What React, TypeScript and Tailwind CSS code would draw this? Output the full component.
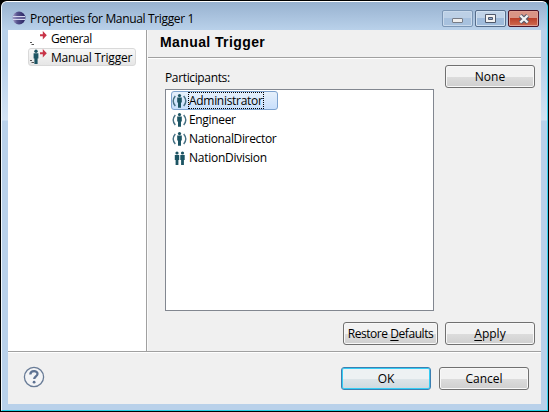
import type { ReactNode } from "react";

function PersonIcon({ group = false }: { group?: boolean }) {
  return (
    <svg width="16" height="16" viewBox="0 0 16 16" className="shrink-0" fill="#1c5463">
      {group ? (
        <>
          <circle cx="5" cy="3" r="1.6" />
          <path d="M2.800 5h4.400v5h-.8v5H3.600v-5h-.8z" />
          <circle cx="10.500" cy="3" r="1.6" />
          <path d="M8.300 5h4.400v5h-.8v5H9.100v-5h-.8z" />
        </>
      ) : (
        <>
          <circle cx="7.500" cy="2.600" r="1.600" />
          <path d="M5.200 4.500h4.600v5H9v5.200H6V9.500h-.8z" />
          <path d="M3.300 3Q-.9 8 3.300 13M11.700 3q4.200 5 0 10" fill="none" stroke="#456f82" strokeWidth="1.4" />
        </>
      )}
    </svg>
  );
}

function TriggerIcon({ person = false }: { person?: boolean }) {
  return (
    <svg width="18" height="16" viewBox="0 0 18 16" className="shrink-0">
      <path d="M0 11.500h2M1.500 13.500h2.500" stroke="#555" strokeWidth="1" />
      {person && (
        <g fill="#1c5463">
          <circle cx="6" cy="2.300" r="1.700" />
          <path d="M3.600 4.200h4.800v5.300h-.8V15H4.400V9.500h-.8z" />
        </g>
      )}
      <path d="M10 3.200h2.800V0L16.800 4.200l-4 4.200V5.300H10z" fill="#c83448" />
    </svg>
  );
}

function Button({ className, primary = false, children }: { className: string; primary?: boolean; children: ReactNode }) {
  return (
    <button
      className={`flex h-[23px] items-center justify-center rounded-[3px] border whitespace-nowrap ${
        primary
          ? "border-[#3c7fb1] bg-linear-to-b from-[#edf1f3] from-50% via-[#dde5e9] via-50% to-[#ced9df] shadow-[inset_0_0_0_1px_#35cdf5]"
          : "border-[#707070] bg-linear-to-b from-[#f2f2f2] from-50% via-[#dddddd] via-50% to-[#cfcfcf] shadow-[inset_0_0_0_1px_#f8f8f8]"
      } ${className}`}
    >
      {children}
    </button>
  );
}

const participants = [
  { name: "Engineer", group: false, tracking: "tracking-[-0.33px]" },
  { name: "NationalDirector", group: false, tracking: "tracking-[-0.34px]" },
  { name: "NationDivision", group: true, tracking: "tracking-[-0.27px]" },
];

export default function App() {
  return (
    <div className="h-[412px] w-[549px] overflow-hidden bg-black p-px font-['Open_Sans','Noto_Sans',sans-serif] text-[12px] leading-4 text-black">
      <div className="flex h-[410px] w-[547px] flex-col rounded-t-[6px] border border-t-white border-r-[#38d2ee] border-b-[#22cfe5] border-l-[#f2f8fc] bg-[#b9d1ea] bg-linear-to-b from-[#b9d1ea] from-[60px] via-[#d3e3f4] via-[118px] to-[#b9d1ea] to-[119px] px-[6px] pb-[6px]">
        <header className="-mx-[6px] flex h-7 shrink-0 items-center rounded-t-[5px] bg-linear-to-b from-[#98b2d0] to-[#b9d1ea] pr-[8px] pl-[10px]">
          <svg width="14" height="14" viewBox="0 0 14 14" className="mt-[4px]">
            <defs>
              <linearGradient id="orb" x2="1">
                <stop stopColor="#aaa3cc" />
                <stop offset=".35" stopColor="#57548f" />
                <stop offset="1" stopColor="#272160" />
              </linearGradient>
            </defs>
            <circle cx="7" cy="7" r="6.400" fill="url(#orb)" />
            <path d="M1 5.500h12M1 8.500h12" stroke="#d5d6ee" strokeWidth="1.100" />
            <path d="M.7 7h12.600" stroke="#8d8abb" strokeWidth="1" />
          </svg>
          <h1 className="mt-[6px] ml-[4px] flex-1 tracking-[-0.34px] whitespace-nowrap">Properties for Manual Trigger 1</h1>
          <div className="mt-[5px] flex gap-[2px]">
            <div className="flex h-[17px] w-[31px] items-center justify-center rounded-[2px] border border-[#7b96b5] bg-linear-to-b from-[#bcd0e6] from-50% to-[#a7c1de] to-50% shadow-[inset_0_0_0_1px_#c9daec]">
              <div className="mt-1 h-[5px] w-[11px] rounded-[1px] border border-[#777c86] bg-[#eeeeee]" />
            </div>
            <div className="flex h-[17px] w-[31px] items-center justify-center rounded-[2px] border border-[#566d8b] bg-linear-to-b from-[#c0d3e8] from-50% to-[#9fbbdb] to-50% shadow-[inset_0_0_0_1px_#d2e1f1]">
              <svg width="11" height="9" viewBox="0 0 11 9">
                <path d="M.5.5h10v8H.5z" fill="#f2f2f2" stroke="#4f596c" />
                <path d="M3.500 3.500h4v2h-4z" fill="#8faad0" stroke="#4f596c" />
              </svg>
            </div>
            <div className="flex h-[17px] w-[31px] items-center justify-center rounded-[2px] border border-[#4c1529] bg-linear-to-b from-[#d99486] from-45% via-[#b83b27] via-45% to-[#cf6b50] shadow-[inset_0_0_0_1px_#e0a093]">
              <svg width="12" height="10" viewBox="0 0 12 10">
                <path d="M2.300 1.500l7.400 7m0-7l-7.400 7" stroke="#54596b" strokeWidth="4.400" />
                <path d="M2.300 1.500l7.400 7m0-7l-7.400 7" stroke="#f4f4f4" strokeWidth="2.400" />
              </svg>
            </div>
          </div>
        </header>
        <main className="flex h-[374px] w-[533px] flex-col bg-[#f0f0f0]">
          <div className="flex h-[321px] shrink-0">
            <nav className="h-full w-[139px] shrink-0 border-r border-[#a0a0a0] bg-white pl-[20px]">
              <div className="flex h-[18px] items-center pl-[2px]">
                <TriggerIcon />
                <span className="ml-[3px] tracking-[-0.5px]">General</span>
              </div>
              <div className="flex h-[18px] w-[108px] items-center rounded-[3px] border border-[#d9d9d9] bg-linear-to-b from-[#f8f8f8] to-[#e6e6e6] pl-px">
                <TriggerIcon person />
                <span className="mt-px ml-[3px] tracking-[-0.22px] whitespace-nowrap">Manual Trigger</span>
              </div>
            </nav>
            <section className="flex flex-1 flex-col border-l border-[#fafafa]">
              <h2 className="h-[28px] border-b border-[#a0a0a0] pt-[4px] pl-[12px] font-['Liberation_Sans',Arial,sans-serif] text-[14px] font-bold tracking-[0.4px]">Manual Trigger</h2>
              <div className="flex flex-1 flex-col border-t border-white pt-[6px] pl-[17px]">
                <div className="flex gap-[11px]">
                  <div className="w-[269px]">
                    <div className="h-[24px] pt-[5px] tracking-[-0.36px]">Participants:</div>
                    <div className="h-[222px] border border-[#828790] bg-white pt-px pl-[5px]">
                      <div className="flex h-[19px] w-[107px] items-center rounded-[3px] border border-[#7da2ce] bg-linear-to-b from-[#e6f0fb] to-[#c8dffc]">
                        <PersonIcon />
                        <span className="h-[17px] w-[76px] border border-dotted border-black tracking-[-0.3px] whitespace-nowrap">Administrator</span>
                      </div>
                      {participants.map((p) => (
                        <div key={p.name} className="flex h-[19px] items-center pl-px">
                          <PersonIcon group={p.group} />
                          <span className={`mt-px ml-px whitespace-nowrap ${p.tracking}`}>{p.name}</span>
                        </div>
                      ))}
                    </div>
                  </div>
                  <Button className="w-[90px]">None</Button>
                </div>
                <div className="mt-[11px] flex gap-[7px] pl-[178px]">
                  <Button className="w-[95px] tracking-[-0.44px]">
                    <span>Restore <u className="underline-offset-2">D</u>efaults</span>
                  </Button>
                  <Button className="w-[90px]">
                    <span><u className="underline-offset-2">A</u>pply</span>
                  </Button>
                </div>
              </div>
            </section>
          </div>
          <footer className="flex flex-1 items-start border-t border-[#a0a0a0] shadow-[inset_0_1px_0_#ffffff]">
            <svg width="22" height="22" viewBox="0 0 22 22" className="mt-[14px] ml-[15px]">
              <circle cx="11" cy="11" r="9.600" fill="#f3f4f6" stroke="#687b96" strokeWidth="1.300" />
              <path d="M7.300 8.500C7.500 4 14.700 4.200 14.500 8c-.1 2.200-3.300 2.500-3.300 5" fill="none" stroke="#5e7292" strokeWidth="2.300" />
              <circle cx="11.100" cy="16.200" r="1.400" fill="#5e7292" />
            </svg>
            <div className="mt-[15px] ml-[296px] flex gap-2">
              <Button primary className="w-[90px]">OK</Button>
              <Button className="w-[90px]">Cancel</Button>
            </div>
          </footer>
        </main>
      </div>
    </div>
  );
}
